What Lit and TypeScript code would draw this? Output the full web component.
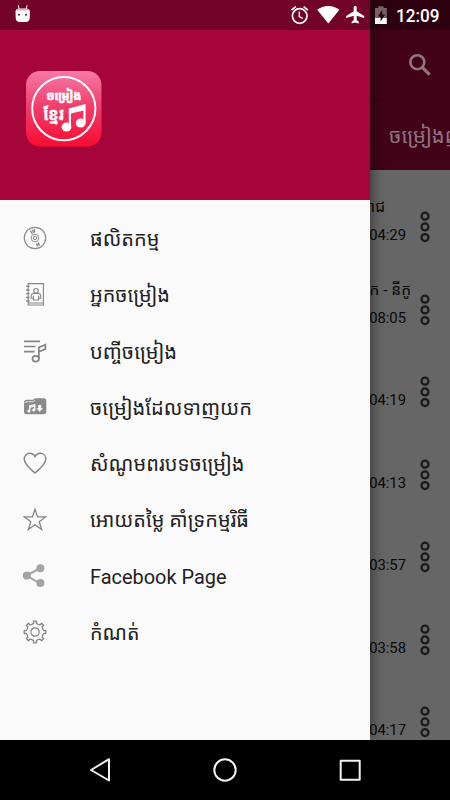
import { LitElement, html, svg, css } from "lit";
import { customElement } from "lit/decorators.js";
import { styleMap } from "lit/directives/style-map.js";

const disc = svg`<g fill="none" stroke="#8b8b8b">
  <circle cx="12" cy="12" r="10.7" stroke-width="1.2"/>
  <circle cx="12" cy="12" r="3.8" stroke-width="1"/>
  <circle cx="12" cy="12" r="1.7" stroke-width="1"/>
  <path d="M7.4 4.600l1.900 3.200M9.400 3.700l1.300 3.400M11.200 3.200l.6 3.200" stroke-width="1.300"/>
  <path d="M13.600 17.200l1 3.200M15.400 16.400l.9 3.400" stroke-width="1.500"/></g>`;
const book = svg`<g fill="none" stroke="#858585" stroke-width="1.100">
  <path d="M5.2 1.600h15.200v21.400H5.200zM5.200 21h15.200"/>
  <path d="M3.200 4.300h3.400M3.200 8h3.400M3.200 11.700h3.400M3.200 15.400h3.400M3.200 19h3.400" stroke-width="1.500"/>
  <circle cx="13" cy="8.800" r="2.300"/>
  <path d="M10.400 18v-1.700H8.200v-2.800q.3-2 2.400-2h4.800q2.200 0 2.400 2v2.800h-2.200V18zM10.400 13.700V17M15.600 13.700V17"/></g>`;
const playlist = svg`<g fill="none" stroke="#858585" stroke-width="1.700">
  <path d="M1 2.400h16M1 7.500h11.300M1 12.600h10.600"/>
  <ellipse cx="12.700" cy="19.700" rx="3.200" ry="2.900"/>
  <path d="M15.900 20V8.400l6.500-2.700v4.400l-6.500 2.700"/></g>`;
const folder = svg`<g transform="translate(0 1)"><path d="M1 6.300q0-2.500 2.500-2.500h5.300q1.200 0 1.800-.5l1-.7q.4-.3 1-.3h8q2.700 0 2.700 2.700v10.900q0 2.400-2.400 2.400H3.400Q1 18.300 1 15.900z" fill="#8b8b8b"/>
  <path d="M1 7.400q.8-1.600 2.400-1.600h5.800q1 0 1.600-.6l1.300-1" fill="none" stroke="#fafafa" stroke-width=".8"/>
  <path d="M6.800 14.800V9.700l5-1v5.100M6.800 11.100l5-1" fill="none" stroke="#fff" stroke-width="1.300"/>
  <circle cx="5.900" cy="15" r="1.500" fill="#fff"/><circle cx="10.700" cy="14" r="1.500" fill="#fff"/>
  <path d="M15.200 9h3v3.300h1.900l-3.400 3.500-3.400-3.500h1.900z" fill="#fff"/></g>`;
const heart = svg`<path d="M12 22C8.200 18.600 1.200 13.600 1.200 8.100 1.200 4.700 3.600 2.300 6.700 2.300c2.200 0 4.200 1.100 5.300 3.300 1.100-2.200 3.100-3.300 5.300-3.300 3.100 0 5.500 2.400 5.500 5.800 0 5.500-7 10.500-10.800 13.900z" fill="none" stroke="#858585" stroke-width="1.400"/>`;
const star = svg`<path d="M12 2.200l2.600 7.700h8.100l-6.500 4.800 2.500 7.800-6.700-4.800-6.700 4.800 2.500-7.800-6.500-4.800h8.100z" fill="none" stroke="#858585" stroke-width="1.300"/>`;
const share = svg`<g fill="#a3a3a3"><path d="M16.500 4.500L3.500 11.600l13 7.500" fill="none" stroke="#a3a3a3" stroke-width="2"/>
  <circle cx="17.400" cy="4.200" r="4"/><circle cx="3.900" cy="11.600" r="4"/><circle cx="17.400" cy="19" r="4"/></g>`;

function gearPath(): string {
  const pts: string[] = [];
  for (let i = 0; i < 8; i++) {
    const at = (deg: number, r: number) => {
      const a = ((i * 45 + deg - 90) * Math.PI) / 180;
      return `${(12 + r * Math.cos(a)).toFixed(2)} ${(12 + r * Math.sin(a)).toFixed(2)}`;
    };
    pts.push(`${i ? "L" : "M"}${at(-15, 8.4)}L${at(-9, 8.9)}L${at(-8, 10.9)}L${at(8, 10.9)}L${at(9, 8.9)}L${at(15, 8.4)}`);
  }
  return pts.join("") + "Z";
}
const gear = svg`<path d=${gearPath()} fill="none" stroke="#858585" stroke-width="1.300" stroke-linejoin="round"/>
  <circle cx="12" cy="12" r="4.200" fill="none" stroke="#858585" stroke-width="1.200"/>`;

const MENU = [
  { icon: disc, label: "ផលិតកម្ម", w: 69.5 },
  { icon: book, label: "អ្នកចម្រៀង", w: 80 },
  { icon: playlist, label: "បញ្ចីចម្រៀង", w: 87 },
  { icon: folder, label: "ចម្រៀងដែលទាញយក", w: 162 },
  { icon: heart, label: "សំណូមពរបទចម្រៀង", w: 154.5 },
  { icon: star, label: "អោយតម្លៃ គាំទ្រកម្មរិធី", w: 159 },
  { icon: share, label: "Facebook Page", w: 136.5 },
  { icon: gear, label: "កំណត់", w: 49.5 },
];

const SONGS = [
  { title: "រាជ", end: 385, time: "04:29" },
  { title: "ក - នីកូ", end: 411, time: "08:05" },
  { title: "", end: 385, time: "04:19" },
  { title: "", end: 385, time: "04:13" },
  { title: "", end: 385, time: "03:57" },
  { title: "", end: 385, time: "03:58" },
  { title: "", end: 385, time: "04:17" },
];

@customElement("song-list")
export class SongList extends LitElement {
  static styles = css`
    :host { display: block; height: 570px; overflow: hidden; background: #666; }
    .row { height: 82.500px; display: grid; grid-template-columns: 411px 28px; box-sizing: border-box; }
    .text { display: flex; flex-direction: column; padding-top: 24px; }
    .title { height: 26px; line-height: 26px; font-size: 15.500px; text-align: right; white-space: nowrap; color: #080808; }
    .time { height: 30px; line-height: 30px; font-size: 14.800px; text-align: right; padding-right: 5px; color: #080808; }
    .more { width: 28px; height: 34px; margin-top: 40.200px; }
  `;
  render() {
    return SONGS.map(
      (s) => html`<div class="row">
        <div class="text">
          <div class="title" style=${styleMap({ width: `${s.end}px` })}>${s.title}</div>
          <div class="time">${s.time}</div>
        </div>
        <svg class="more" viewBox="0 0 28 34" fill="none" stroke="#1a1a1a" stroke-width="2.200">
          <circle cx="14" cy="6.200" r="3.500" /><circle cx="14" cy="16.900" r="3.500" /><circle cx="14" cy="27.600" r="3.500" />
        </svg>
      </div>`,
    );
  }
}

@customElement("nav-drawer")
export class NavDrawer extends LitElement {
  static styles = css`
    :host { display: flex; flex-direction: column; background: #fafafa; box-shadow: 0 0 14px rgba(0, 0, 0, 0.55); }
    .head { height: 200px; background: #a5053b; padding: 70px 0 0 25px; box-sizing: border-box; }
    .logo { width: 77px; height: 77px; display: block; }
    .logo-text { font-family: "Khmer OS Muol", "Noto Sans Khmer", "Noto Sans", sans-serif; font-weight: 700; fill: #fff; stroke: #fff; stroke-width: 0.5; }
    .menu { padding-top: 10px; display: flex; flex-direction: column; }
    .item { height: 56.250px; display: flex; align-items: center; padding-left: 23px; color: #202020; }
    .icon { width: 24px; height: 24px; margin-right: 43px; flex: none; }
    .label { height: 32px; width: 240px; display: block; overflow: visible; font-size: 20px; fill: #212121; }
  `;
  render() {
    return html`
      <div class="head">
        <svg class="logo" viewBox="0 0 77 77">
          <defs><linearGradient id="g" x1="0" y1="0" x2="0" y2="1">
            <stop offset="0" stop-color="#f779a8" /><stop offset=".5" stop-color="#f03a68" /><stop offset="1" stop-color="#f90c32" />
          </linearGradient></defs>
          <rect x="1" y="1" width="75.500" height="75.500" rx="14" fill="url(#g)" />
          <circle cx="38.800" cy="38.600" r="31.600" fill="none" stroke="#fff" stroke-width="2" />
          <text class="logo-text" x="21.500" y="30" font-size="12.500" textLength="35" lengthAdjust="spacingAndGlyphs">ចម្រៀង</text>
          <text class="logo-text" x="18.500" y="50" font-size="17" textLength="20.500" lengthAdjust="spacingAndGlyphs">ខ្មែរ</text>
          <g fill="#fff"><path d="M43.800 57V38.500L60.600 34v19h-2.200V40.500L46 43.500V57z" />
            <ellipse cx="41.500" cy="57" rx="4.900" ry="4.600" /><ellipse cx="55.700" cy="53" rx="4.900" ry="4.600" /></g>
        </svg>
      </div>
      <div class="menu">
        ${MENU.map(
          (m) => html`<div class="item">
            <svg class="icon" viewBox="0 0 24 24">${m.icon}</svg>
            <svg class="label"><text x="0" y="23.500" textLength=${m.w} lengthAdjust="spacingAndGlyphs">${m.label}</text></svg>
          </div>`,
        )}
      </div>`;
  }
}

@customElement("app-root")
export class AppRoot extends LitElement {
  static styles = css`
    :host { display: block; position: relative; width: 450px; height: 800px; overflow: hidden; background: #000;
      font-family: Roboto, "Noto Sans Khmer", "Noto Sans", sans-serif; }
    .page { display: flex; flex-direction: column; height: 740px; overflow: hidden; }
    .bar { height: 100px; box-sizing: border-box; background: #420218; display: flex; justify-content: flex-end; padding: 51px 16px 0 0; border-bottom: 1px solid #3a0014; }
    .search { width: 28px; height: 28px; }
    .tabs { height: 70px; background: #420218; padding-left: 389px; box-sizing: border-box; overflow: hidden; }
    .tab { width: 90px; height: 70px; display: block; font-size: 20px; fill: #8c7580; }
    .drawer { position: absolute; left: 0; top: 0; width: 370px; height: 740px; }
    .status { position: absolute; left: 0; top: 0; width: 450px; height: 30px; background: rgba(0, 0, 0, 0.300); }
    .status-icons { display: block; width: 450px; height: 30px; }
    .clock { font-size: 17.500px; font-weight: 500; fill: #fff; }
    .nav { height: 60px; display: flex; justify-content: space-between; align-items: center; padding: 0 85px; background: #000; position: relative; box-sizing: border-box; }
    .key { width: 30px; height: 30px; fill: none; stroke: #f2f2f2; stroke-width: 2; stroke-linejoin: round; }
  `;
  render() {
    return html`
      <div class="page">
        <div class="bar">
          <svg class="search" viewBox="0 0 28 28" fill="none" stroke="#8e7780">
            <circle cx="11.300" cy="11.200" r="7" stroke-width="2.600" /><path d="M16.300 16.300l7.300 7.300" stroke-width="3.200" />
          </svg>
        </div>
        <div class="tabs"><svg class="tab"><text x="0" y="43" textLength="75" lengthAdjust="spacingAndGlyphs">ចម្រៀងញ</text></svg></div>
        <song-list></song-list>
      </div>
      <nav-drawer class="drawer"></nav-drawer>
      <div class="status">
        <svg class="status-icons" viewBox="0 0 450 30">
          <path d="M18.300 5.300l.8 4M27 5.300l-.8 4" stroke="#fff" stroke-width="1" />
          <path d="M15.500 11.500q.2-3 4-3h6.400q3.800 0 4 3l-.2 6.500q-.3 4-4 4h-6q-3.700 0-4-4z" fill="#fff" />
          <path d="M17 9.800h11.500" stroke="#d9b5c2" stroke-width="1.500" />
          <circle cx="19" cy="14.800" r="1" fill="#74042a" /><circle cx="26" cy="14.800" r="1" fill="#74042a" />
          <g fill="none" stroke="#fff" stroke-width="1.700"><circle cx="299.700" cy="16" r="7.300" />
            <path d="M299.300 11.500v5l3.500 2" stroke-width="1.400" /><path d="M291.500 10.200l4.300-3.600M307.900 10.200l-4.300-3.600" /></g>
          <path d="M328.300 23.500L317.200 9.700q4.700-3.800 11.100-3.800t11.100 3.800z" fill="#fff" />
          <path d="M364.200 18v-2l-7.500-4.700V7.500q0-1.700-1.500-1.700t-1.500 1.700v3.800L346.200 16v2l7.500-2.300v4.500l-2.100 1.600v1.700l3.600-1 3.600 1v-1.700l-2.100-1.600v-4.500z" fill="#fff" />
          <path d="M375 8h3.300V6.200h5.200V8h3.300v10H375z" fill="#74616a" /><path d="M375 18h11.800v6H375z" fill="#fff" />
          <path d="M382.300 9.800l-4.500 6.700h2.800v5l4.600-7h-2.900z" fill="#25000e" />
          <text class="clock" x="396" y="22" textLength="43.500" lengthAdjust="spacingAndGlyphs">12:09</text>
        </svg>
      </div>
      <div class="nav">
        <svg class="key" viewBox="0 0 30 30"><path d="M24 4.200v21.300L6 15z" /></svg>
        <svg class="key" viewBox="0 0 30 30"><circle cx="15" cy="15" r="10.700" /></svg>
        <svg class="key" viewBox="0 0 30 30"><path d="M5.700 5.700h19v19h-19z" /></svg>
      </div>`;
  }
}
